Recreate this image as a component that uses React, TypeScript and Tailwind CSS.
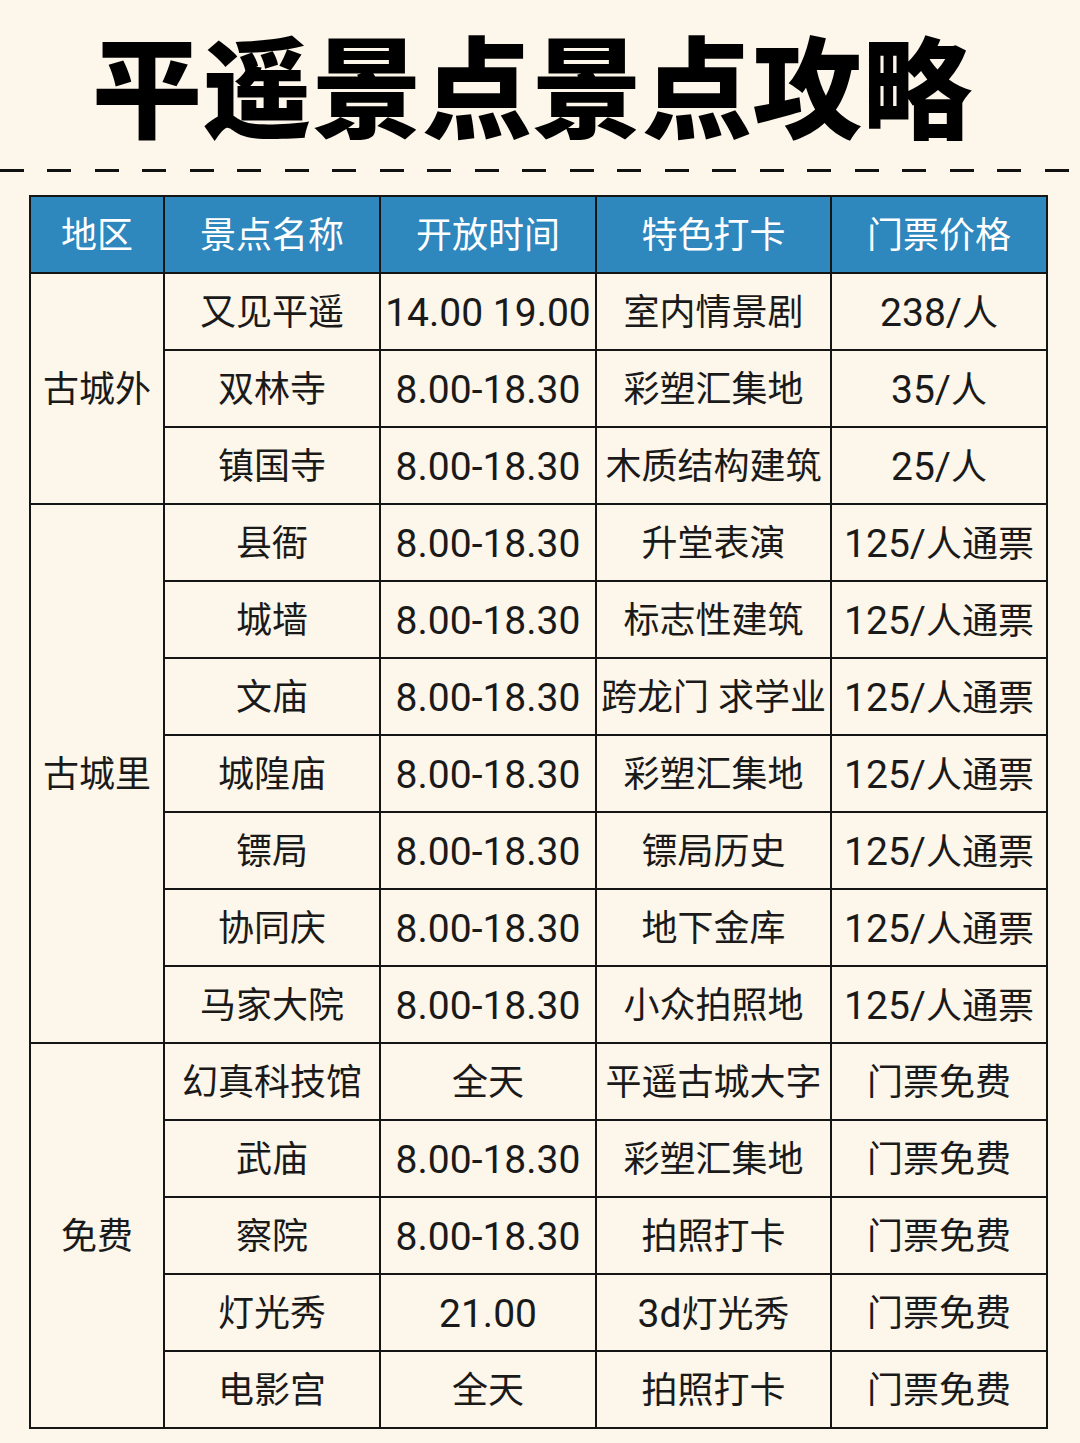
import React from "react";

const rows: { region?: string; span?: number; cells: string[] }[] = [
  { region: "古城外", span: 3, cells: ["又见平遥", "14.00 19.00", "室内情景剧", "238/人"] },
  { cells: ["双林寺", "8.00-18.30", "彩塑汇集地", "35/人"] },
  { cells: ["镇国寺", "8.00-18.30", "木质结构建筑", "25/人"] },
  { region: "古城里", span: 7, cells: ["县衙", "8.00-18.30", "升堂表演", "125/人通票"] },
  { cells: ["城墙", "8.00-18.30", "标志性建筑", "125/人通票"] },
  { cells: ["文庙", "8.00-18.30", "跨龙门 求学业", "125/人通票"] },
  { cells: ["城隍庙", "8.00-18.30", "彩塑汇集地", "125/人通票"] },
  { cells: ["镖局", "8.00-18.30", "镖局历史", "125/人通票"] },
  { cells: ["协同庆", "8.00-18.30", "地下金库", "125/人通票"] },
  { cells: ["马家大院", "8.00-18.30", "小众拍照地", "125/人通票"] },
  { region: "免费", span: 5, cells: ["幻真科技馆", "全天", "平遥古城大字", "门票免费"] },
  { cells: ["武庙", "8.00-18.30", "彩塑汇集地", "门票免费"] },
  { cells: ["察院", "8.00-18.30", "拍照打卡", "门票免费"] },
  { cells: ["灯光秀", "21.00", "3d灯光秀", "门票免费"] },
  { cells: ["电影宫", "全天", "拍照打卡", "门票免费"] },
];

const spanClass: Record<number, string> = {
  3: "row-span-3",
  5: "row-span-5",
  7: "row-span-7",
};

const headers = ["地区", "景点名称", "开放时间", "特色打卡", "门票价格"];

function Rich({ text }: { text: string }) {
  const parts = text.split(/([0-9A-Za-z./\-]+(?: [0-9A-Za-z./\-]+)*)/).filter((p) => p !== "");
  return (
    <>
      {parts.map((p, i) =>
        /^[0-9A-Za-z./\-]/.test(p) ? (
          <span key={i} className="text-[39px]">
            {p}
          </span>
        ) : (
          <span key={i}>{p}</span>
        )
      )}
    </>
  );
}

export default function App() {
  return (
    <div
      className="w-[1080px] h-[1443px] bg-[#fdf6ea] overflow-hidden"
      style={{ fontFamily: '"Noto Sans CJK SC", "Noto Sans", sans-serif' }}
    >
      <div className="h-[169px] pt-[27px] flex justify-center pr-[16px]">
        <div className="text-[110px] leading-none font-black text-black whitespace-nowrap">
          平遥景点景点攻略
        </div>
      </div>
      <div className="h-[3px] w-full bg-[repeating-linear-gradient(90deg,#111_0px,#111_24px,transparent_24px,transparent_47.5px)]" />
      <div className="pt-[23px] pl-[29px]">
        <div className="w-[1019px] grid grid-cols-[134px_216px_216px_235px_216px] auto-rows-[77px] border-t-2 border-l-2 border-[#151515] font-['Roboto','Noto_Sans_CJK_SC',sans-serif]">
          {headers.map((h) => (
            <div
              key={h}
              className="bg-[#2e87bd] border-r-2 border-b-2 border-[#151515] flex items-center justify-center pt-[3px] text-white text-[36px] leading-none whitespace-nowrap"
            >
              {h}
            </div>
          ))}
          {rows.map((r, i) => (
            <React.Fragment key={i}>
              {r.region && (
                <div
                  className={`${spanClass[r.span!]} border-r-2 border-b-2 border-[#151515] flex items-center justify-center pt-[3px] text-[#1a1a1a] text-[36px] leading-none whitespace-nowrap`}
                >
                  {r.region}
                </div>
              )}
              {r.cells.map((c, j) => (
                <div
                  key={j}
                  className="border-r-2 border-b-2 border-[#151515] flex items-center justify-center pt-[3px] text-[#1a1a1a] text-[36px] leading-none whitespace-nowrap"
                >
                  <div>
                    <Rich text={c} />
                  </div>
                </div>
              ))}
            </React.Fragment>
          ))}
        </div>
      </div>
    </div>
  );
}
